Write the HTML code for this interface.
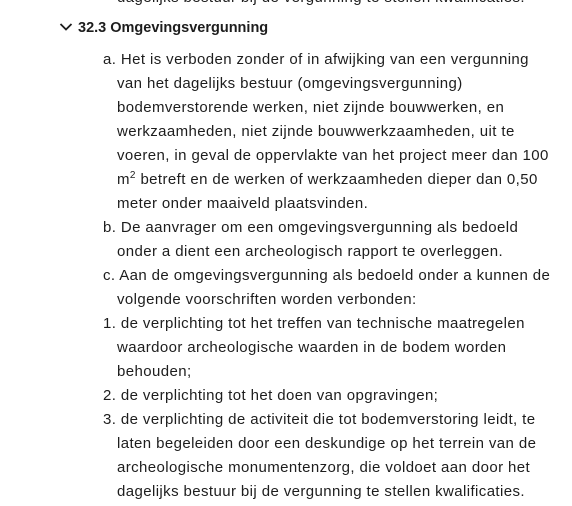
<!DOCTYPE html>
<html><head><meta charset="utf-8"><style>
body{margin:0;width:572px;height:506px;overflow:hidden;background:#fff;font-family:"Liberation Sans",sans-serif;color:#1d1d1d;position:relative}
.l{position:absolute;white-space:nowrap;font-size:15px;line-height:24px;letter-spacing:0.4px}
h{position:absolute;left:78px;top:18px;font-weight:bold;font-size:14.5px;line-height:20px;white-space:nowrap}
sup{font-size:10px;line-height:0;vertical-align:6px}
</style></head><body>
<div class="l" style="left:117px;top:-14px">dagelijks bestuur bij de vergunning te stellen kwalificaties.</div>
<svg style="position:absolute;left:59px;top:22px" width="14" height="10" viewBox="0 0 14 10"><path d="M1.5 2 L7 7.5 L12.5 2" fill="none" stroke="#1d1d1d" stroke-width="1.8"/></svg>
<h>32.3 Omgevingsvergunning</h>
<div class="l" style="left:103px;top:48px">a. Het is verboden zonder of in afwijking van een vergunning</div>
<div class="l" style="left:117px;top:72px">van het dagelijks bestuur (omgevingsvergunning)</div>
<div class="l" style="left:117px;top:96px">bodemverstorende werken, niet zijnde bouwwerken, en</div>
<div class="l" style="left:117px;top:120px">werkzaamheden, niet zijnde bouwwerkzaamheden, uit te</div>
<div class="l" style="left:117px;top:144px">voeren, in geval de oppervlakte van het project meer dan 100</div>
<div class="l" style="left:117px;top:168px">m<sup>2</sup> betreft en de werken of werkzaamheden dieper dan 0,50</div>
<div class="l" style="left:117px;top:192px">meter onder maaiveld plaatsvinden.</div>
<div class="l" style="left:103px;top:216px">b. De aanvrager om een omgevingsvergunning als bedoeld</div>
<div class="l" style="left:117px;top:240px">onder a dient een archeologisch rapport te overleggen.</div>
<div class="l" style="left:103px;top:264px">c. Aan de omgevingsvergunning als bedoeld onder a kunnen de</div>
<div class="l" style="left:117px;top:288px">volgende voorschriften worden verbonden:</div>
<div class="l" style="left:103px;top:312px">1. de verplichting tot het treffen van technische maatregelen</div>
<div class="l" style="left:117px;top:336px">waardoor archeologische waarden in de bodem worden</div>
<div class="l" style="left:117px;top:360px">behouden;</div>
<div class="l" style="left:103px;top:384px">2. de verplichting tot het doen van opgravingen;</div>
<div class="l" style="left:103px;top:408px">3. de verplichting de activiteit die tot bodemverstoring leidt, te</div>
<div class="l" style="left:117px;top:432px">laten begeleiden door een deskundige op het terrein van de</div>
<div class="l" style="left:117px;top:456px">archeologische monumentenzorg, die voldoet aan door het</div>
<div class="l" style="left:117px;top:480px">dagelijks bestuur bij de vergunning te stellen kwalificaties.</div>
</body></html>
